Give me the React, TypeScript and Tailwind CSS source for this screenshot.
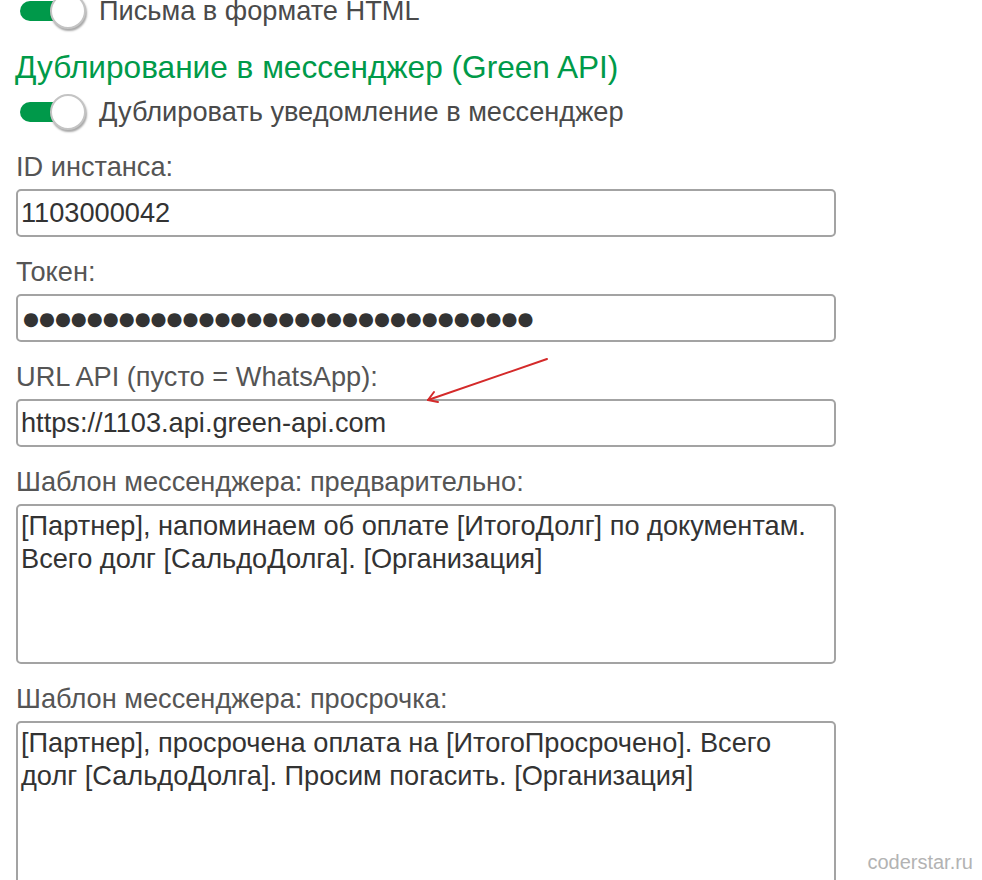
import React from "react";

function Toggle({ label }: { label: string }) {
    return (
        <div className="flex items-center h-[40px] gap-[13px]">
            <div className="relative w-[70px] h-[40px] shrink-0">
                <div className="absolute left-[4px] top-[10px] w-[58px] h-[20px] rounded-full bg-[#00994a]" />
                <div className="absolute left-[34px] top-[2px] w-[36px] h-[36px] rounded-full bg-white border-2 border-[#c4c4c4] shadow-[1px_2px_2px_rgba(0,0,0,0.35)]" />
            </div>
            <span className="text-[27.2px] leading-[40px] text-[#4a4a4a] whitespace-nowrap">{label}</span>
        </div>
    );
}

function Field({ label, children }: { label: string; children: React.ReactNode }) {
    return (
        <div className="flex flex-col">
            <label className="text-[27.2px] leading-[32px] h-[32px] text-[#555] mb-[6px] whitespace-nowrap">{label}</label>
            {children}
        </div>
    );
}

const inputCls =
    "block w-[820px] h-[48px] border-2 border-[#a3a3a3] rounded-[5px] px-[3px] text-[27.2px] text-[#333] bg-white outline-none";
const areaCls =
    "block w-[820px] border-2 border-[#a3a3a3] rounded-[5px] px-[3px] pt-[3px] text-[27.2px] leading-[33px] text-[#333] bg-white outline-none resize-none overflow-hidden";

export default function App() {
    return (
        <div
            className="relative w-[982px] h-[880px] overflow-hidden bg-white"
            style={{ fontFamily: '"Liberation Sans", Arial, sans-serif' }}
        >
            <div className="pl-[16px] mt-[-9px]">
                <Toggle label="Письма в формате HTML" />
                <h2 className="mt-[17px] mb-[6px] text-[31.6px] leading-[38px] text-[#009a49] whitespace-nowrap -ml-[1px]">
                    Дублирование в мессенджер (Green API)
                </h2>
                <Toggle label="Дублировать уведомление в мессенджер" />

                <div className="mt-[19px] flex flex-col gap-[19px]">
                    <Field label="ID инстанса:">
                        <input className={inputCls} readOnly value="1103000042" />
                    </Field>
                    <Field label="Токен:">
                        <input
                            className={inputCls + " pl-[5px]"}
                            style={{ fontFamily: '"DejaVu Sans", sans-serif', fontSize: 18.3 }}
                            readOnly
                            value={"●".repeat(32)}
                        />
                    </Field>
                    <Field label="URL API (пусто = WhatsApp):">
                        <input className={inputCls} readOnly value="https://1103.api.green-api.com" />
                    </Field>
                    <Field label="Шаблон мессенджера: предварительно:">
                        <textarea
                            className={areaCls + " h-[160px]"}
                            readOnly
                            value={"[Партнер], напоминаем об оплате [ИтогоДолг] по документам.\nВсего долг [СальдоДолга]. [Организация]"}
                        />
                    </Field>
                    <Field label="Шаблон мессенджера: просрочка:">
                        <textarea
                            className={areaCls + " h-[180px]"}
                            readOnly
                            value={"[Партнер], просрочена оплата на [ИтогоПросрочено]. Всего\nдолг [СальдоДолга]. Просим погасить. [Организация]"}
                        />
                    </Field>
                </div>
            </div>

            {/* red annotation arrow */}
            <svg className="absolute left-0 top-0 pointer-events-none" width="982" height="880">
                <g stroke="#d42a2a" strokeWidth="2" fill="none" strokeLinecap="round">
                    <line x1="547" y1="359" x2="428" y2="400" />
                    <line x1="428" y1="400" x2="434" y2="392" />
                    <line x1="428" y1="400" x2="438" y2="402" />
                </g>
            </svg>

            <div className="absolute right-[9px] bottom-[6px] text-[20px] leading-[24px] text-[#b3b3b3]">coderstar.ru</div>
        </div>
    );
}
